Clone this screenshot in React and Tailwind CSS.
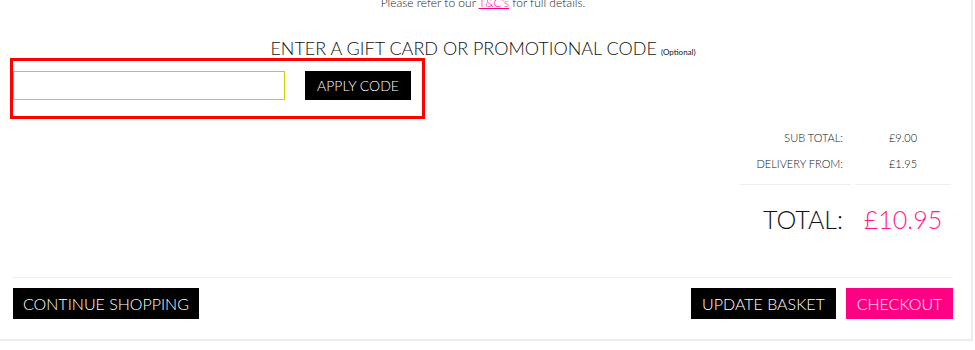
export default function App() {
  return (
    <div className="w-[975px] h-[350px] bg-white overflow-hidden font-[Lato,sans-serif]">
      <div className="w-[973px] h-[341px] border-r-2 border-b-2 border-[#ececec] flex flex-col pl-[13px] pr-[18px]">
        <p className="text-center text-[12px] leading-[14px] -mt-[4px] text-[#222] font-light">
          Please refer to our{" "}
          <a className="text-[#ff0084] underline">T&amp;C's</a> for full details.
        </p>
        <div className="mt-[28px] text-center leading-[20px] text-[#111]">
          <span className="text-[18px] font-light">ENTER A GIFT CARD OR PROMOTIONAL CODE</span>{" "}
          <span className="text-[8px]">(Optional)</span>
        </div>
        <div className="-ml-[3px] -mt-[4px] w-[415px] h-[61px] border-[3px] border-[#ff0000] flex items-start pt-[10px]">
          <input className="w-[272px] h-[29px] border border-[#cccc00] outline-none" />
          <button className="ml-[20px] w-[106px] h-[29px] bg-black text-white text-[14px] font-light leading-none">
            APPLY CODE
          </button>
        </div>
        <div className="flex justify-end mt-[6px] pr-[2px]">
          <div className="w-[211px] flex flex-col text-[11px] text-[#111] font-light">
            <div className="flex h-[26px] items-center">
              <div className="w-[111px] text-right pr-[8px]">SUB TOTAL:</div>
              <div className="w-[4px]" />
              <div className="flex-1 text-center">£9.00</div>
            </div>
            <div className="flex h-[26px] items-center">
              <div className="w-[111px] text-right pr-[8px]">DELIVERY FROM:</div>
              <div className="w-[4px]" />
              <div className="flex-1 text-center">£1.95</div>
            </div>
            <div className="flex h-[8px] items-end">
              <div className="w-[111px] border-b border-[#eeeeee]" />
              <div className="w-[4px]" />
              <div className="flex-1 border-b border-[#eeeeee]" />
            </div>
            <div className="flex h-[92px] items-start pt-[19px] leading-[30px]">
              <div className="w-[111px] text-right pr-[8px] text-[25px] text-[#111]">TOTAL:</div>
              <div className="w-[4px]" />
              <div className="flex-1 text-center text-[25px] text-[#ff1a8c]">£10.95</div>
            </div>
          </div>
        </div>
        <div className="border-t border-[#eeeeee]" />
        <div className="flex mt-[10px] items-start">
          <button className="h-[31px] px-[10px] bg-black text-white text-[16px] font-light leading-none">
            CONTINUE SHOPPING
          </button>
          <div className="flex-1" />
          <button className="h-[31px] w-[145px] bg-black text-white text-[16px] font-light leading-none">
            UPDATE BASKET
          </button>
          <button className="ml-[10px] h-[31px] w-[107px] bg-[#ff0084] text-white text-[16px] font-light leading-none">
            CHECKOUT
          </button>
        </div>
      </div>
    </div>
  );
}
